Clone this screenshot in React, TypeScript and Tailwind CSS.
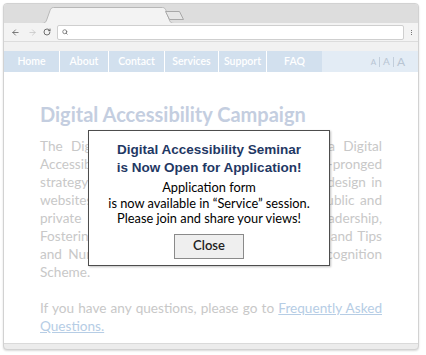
import { ArrowLeft, ArrowRight, RotateCw, Search } from 'lucide-react';

const NAV = [
  { label: 'Home', w: 'w-[56px]' },
  { label: 'About', w: 'w-[49px]' },
  { label: 'Contact', w: 'w-[56px]' },
  { label: 'Services', w: 'w-[54px]' },
  { label: 'Support', w: 'w-[48px]' },
  { label: 'FAQ', w: 'w-[55px]' },
];

// each visual line of the paragraph, justified on its own
const LINES = [
  'The Digital Accessibility Campaign (DAC) is a Digital',
  'Accessibility initiative which adopts a multi-pronged',
  'strategy to promote and encourage accessible design in',
  'websites and mobile applications among the public and',
  'private sectors, which includes Cultivating Leadership,',
  'Fostering Awareness, Sharing Useful Resources and Tips',
  'and Nurturing Talent, and the Accessibility Recognition',
];

function BrowserChrome() {
  return (
    <>
      <div className="relative h-[19px] shrink-0 bg-[#dddddd]">
        <svg className="absolute left-0 top-0" width="200" height="19" viewBox="0 0 200 19">
          <path
            d="M38 19.5 C41 19.5 42 18 43 15 L46 6.5 C46.7 4.8 47.5 3.5 49.5 3.5 L158.5 3.5 C160.5 3.5 161.3 4.8 162 6.5 L165 15 C166 18 167 19.5 170 19.5"
            fill="#f3f3f3"
            stroke="#b8b8b8"
            strokeWidth="1"
          />
          <path d="M161.5 7.5 L175.5 7.5 L179.5 15.5 L165.5 15.5 Z" fill="#e6e6e6" stroke="#a8a8a8" strokeWidth="1" />
        </svg>
      </div>
      <div className="flex h-[18px] shrink-0 items-center bg-[#f3f3f3] pl-[7px] pr-[4px]">
        <ArrowLeft size={9} strokeWidth={2} className="text-[#555]" />
        <ArrowRight size={9} strokeWidth={2} className="ml-[8px] text-[#c4c4c4]" />
        <RotateCw size={8} strokeWidth={2.5} className="ml-[6px] text-[#555]" />
        <div className="ml-[6px] flex h-[15px] flex-1 items-center rounded-[2px] border border-[#cfcfcf] bg-white pl-[4px]">
          <Search size={6} strokeWidth={3} className="text-[#666]" />
        </div>
        <div className="ml-[4px] flex w-[6px] flex-col items-center gap-[1px]">
          <span className="h-[1px] w-[1px] bg-[#777]" />
          <span className="h-[1px] w-[1px] bg-[#777]" />
          <span className="h-[1px] w-[1px] bg-[#777]" />
        </div>
      </div>
      <div className="h-[10px] shrink-0 border-t border-[#dcdcdc] bg-[#f1f1f1]" />
    </>
  );
}

function NavBar() {
  return (
    <div className="flex h-[21px] shrink-0 bg-[#e3ecf5] font-['Lato',sans-serif] text-[10.5px]">
      <div className="flex bg-[#d2e0ee]">
        {NAV.map((item, i) => (
          <div
            key={item.label}
            className={`${item.w} flex items-center justify-center font-semibold text-white ${
              i < NAV.length - 1 ? 'border-r border-white' : ''
            }`}
          >
            {item.label}
          </div>
        ))}
      </div>
      <div className="flex flex-1 items-center justify-end gap-[3px] pr-[13px] text-[#b8c5d3]">
        <span className="text-[8px]">A</span>
        <span className="h-[10px] w-px bg-[#c2cedb]" />
        <span className="text-[10px]">A</span>
        <span className="h-[10px] w-px bg-[#c2cedb]" />
        <span className="text-[12px]">A</span>
      </div>
    </div>
  );
}

function Modal() {
  return (
    <div className="absolute left-[88px] top-[130px] flex h-[136px] w-[242px] flex-col items-center border border-[#4d4d4d] bg-white pt-[10px] shadow-[1px_1px_2px_rgba(0,0,0,0.25)]">
      <div className="text-center font-['Liberation_Sans',Arial,sans-serif] text-[13.5px] font-bold leading-[18px] text-[#1f3864]">
        Digital Accessibility Seminar
        <br />
        is Now Open for Application!
      </div>
      <div className="mt-[3px] text-center font-['Lato',sans-serif] text-[12.8px] leading-[15.5px] text-black">
        Application form
        <br />
        is now available in “Service” session.
        <br />
        Please join and share your views!
      </div>
      <button className="mt-[7px] flex h-[25px] w-[70px] items-center justify-center border border-[#8a8a8a] bg-[#efefef] font-['Lato',sans-serif] text-[13px] font-semibold text-[#222]">
        Close
      </button>
    </div>
  );
}

export default function App() {
  return (
    <div className="relative h-[355px] w-[426px] overflow-hidden bg-white">
      <div className="ml-[3px] mt-[3px] flex h-[347px] w-[416px] flex-col overflow-hidden rounded-[4px] border border-[#d2d2d2] bg-[#ececec] shadow-[0_1px_2px_rgba(0,0,0,0.15)]">
        <BrowserChrome />
        <NavBar />
        <div className="mb-[5px] min-h-0 flex-1 border-b border-[#dadada] bg-white px-[36px] pt-[29px] font-['Lato',sans-serif]">
          <h1 className="text-[20px] font-bold leading-[26px] text-[#c4cee0]">Digital Accessibility Campaign</h1>
          <div className="mt-[10px] text-[13.6px] leading-[18px] text-[#c8c8c8]">
            {LINES.map((line) => (
              <div key={line} className="text-justify [text-align-last:justify]">
                {line}
              </div>
            ))}
            <div>Scheme.</div>
            <div className="mt-[18px] text-justify [text-align-last:justify]">
              If you have any questions, please go to{' '}
              <span className="text-[#b6cde5] underline">Frequently Asked</span>
            </div>
            <div>
              <span className="text-[#b6cde5] underline">Questions.</span>
            </div>
          </div>
        </div>
      </div>
      <Modal />
    </div>
  );
}
